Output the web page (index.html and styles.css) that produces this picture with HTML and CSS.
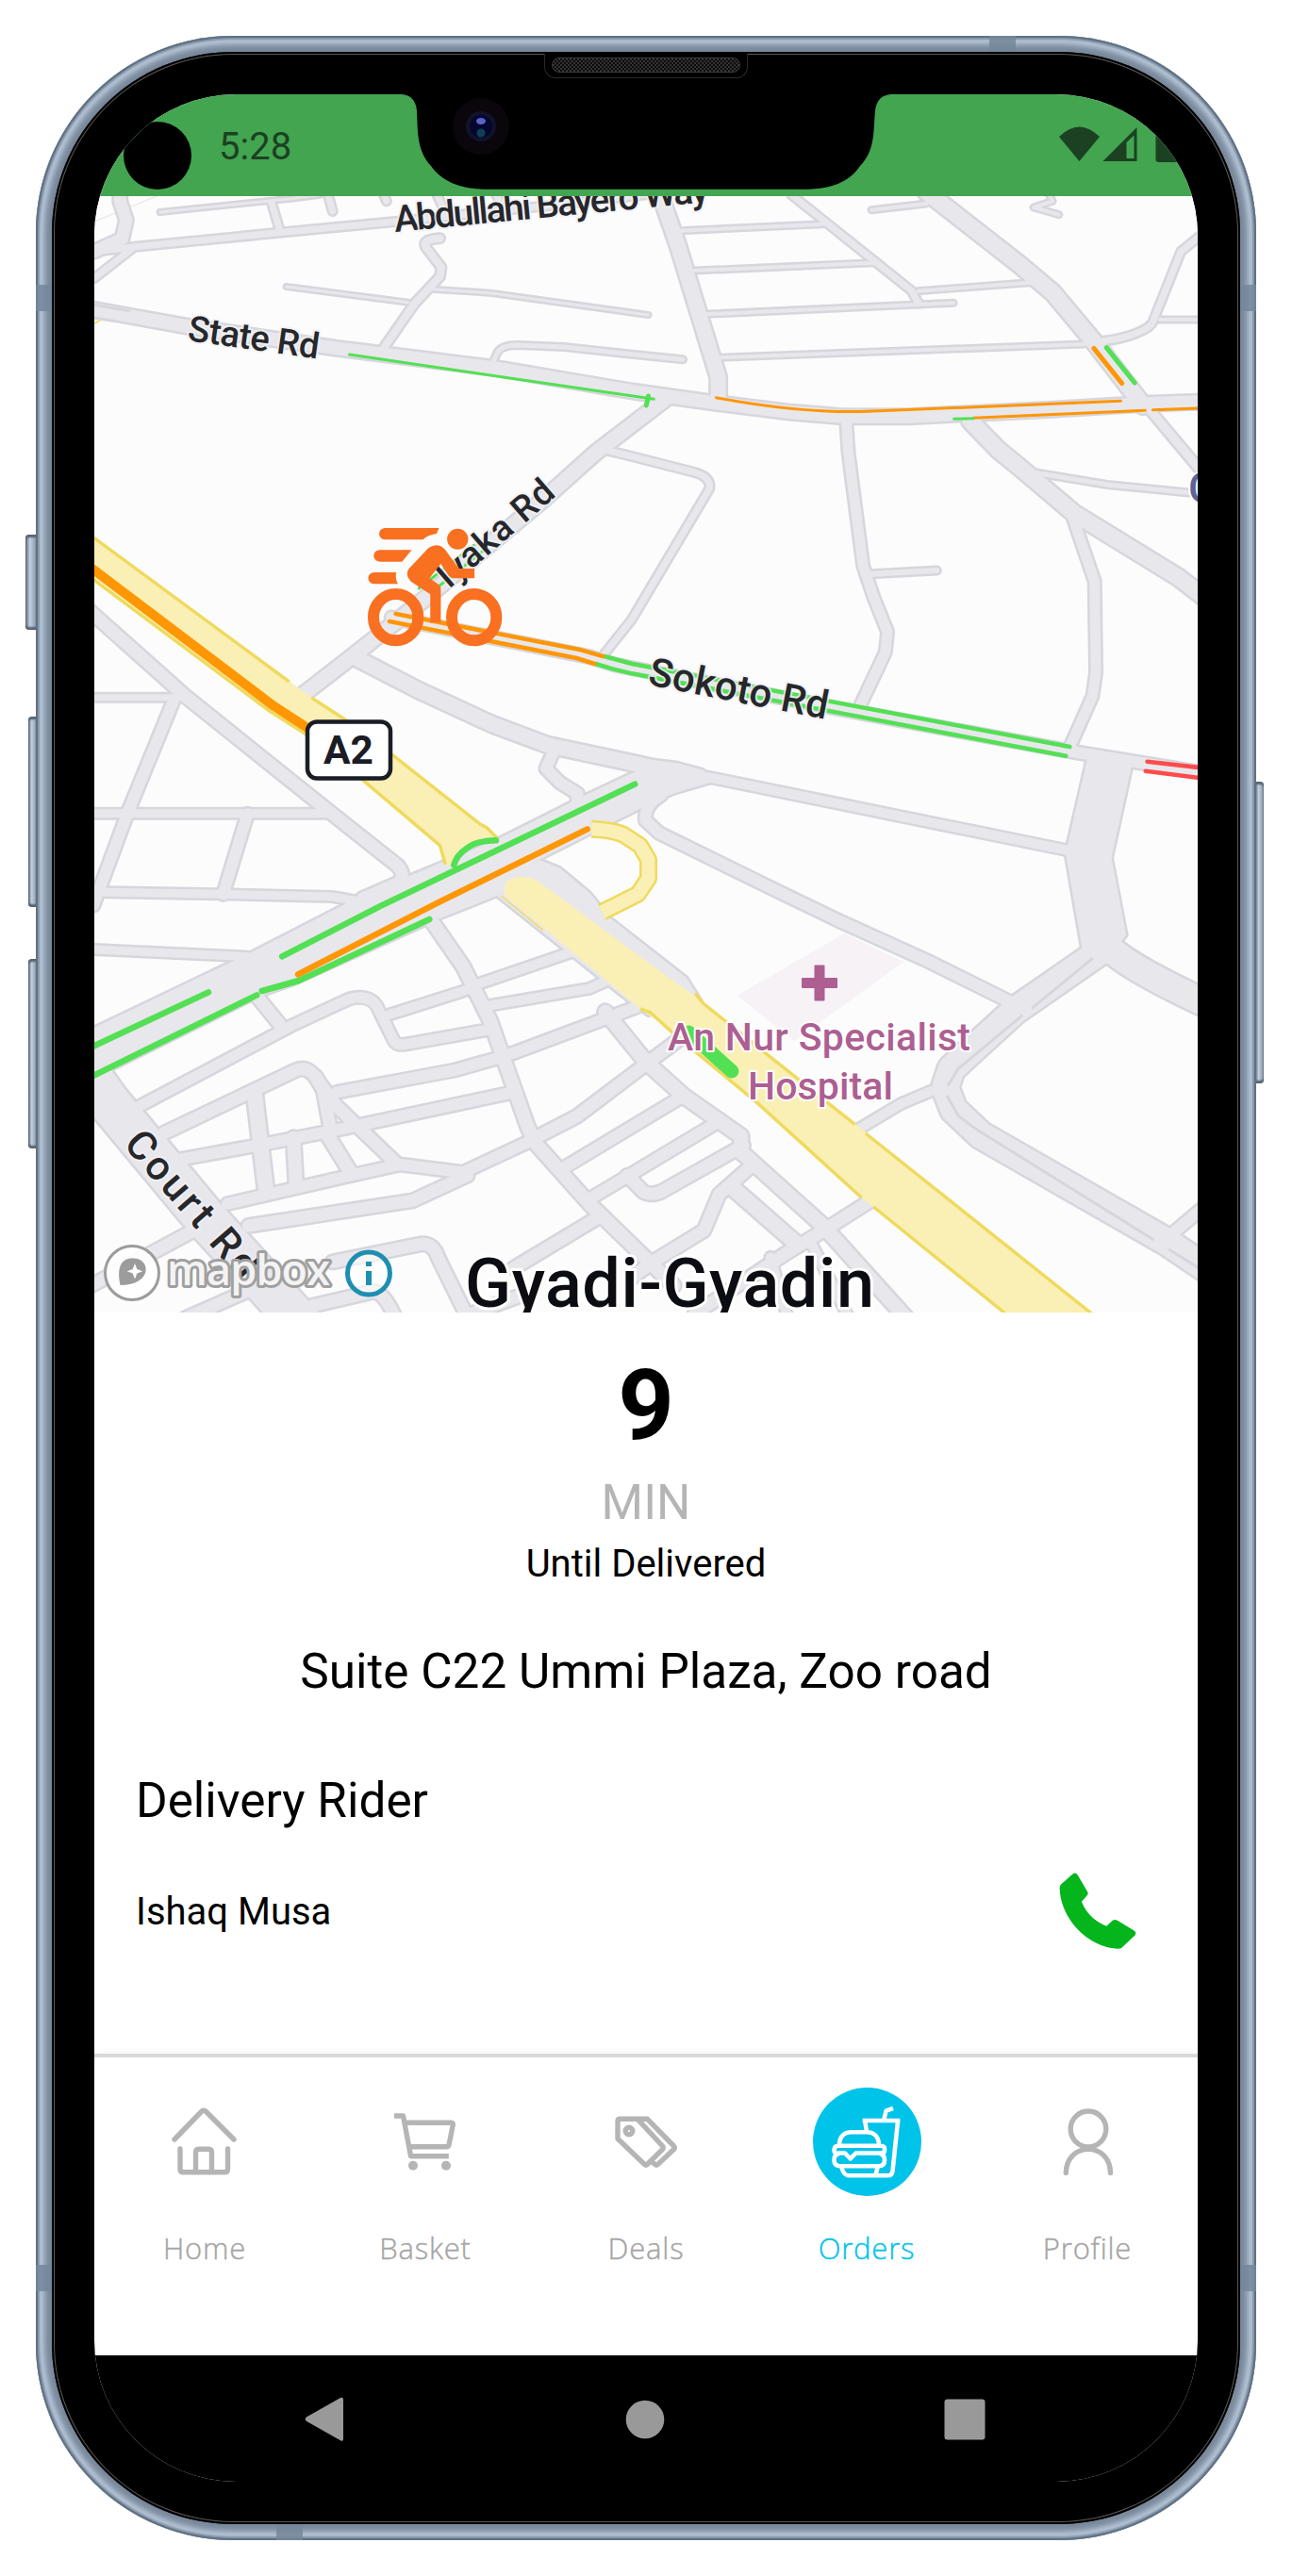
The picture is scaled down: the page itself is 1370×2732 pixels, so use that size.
FILE: index.html
```html
<!DOCTYPE html>
<html lang="en">
<head>
<meta charset="utf-8">
<title>Order tracking</title>
<link rel="stylesheet" href="styles.css">
</head>
<body>
<div class="phone">
  <i class="key key-mute"></i><i class="key key-up"></i><i class="key key-down"></i><i class="key key-power"></i>
  <div class="frame">
    <i class="band band-l1"></i><i class="band band-l2"></i><i class="band band-r1"></i><i class="band band-r2"></i><i class="band band-t"></i><i class="band band-b"></i>
    <div class="bezel">
      <main class="screen">
        <header class="status">
          <span class="punch"></span>
          <time class="clock">5:28</time>
          <svg class="signals" viewBox="0 0 147 40" width="147" height="40">
            <path d="M0 12Q21.500-9 43 12L21.500 38Z"/>
            <path fill-rule="evenodd" d="M46.500 38L82.500 2V38ZM71.500 35H79.500V10.500L71.500 18Z"/>
            <rect x="102.500" y="4" width="24" height="35" rx="3"/>
          </svg>
        </header>

        <section class="map">
          <svg viewBox="100 208 1170 1184" width="1170" height="1184">
            <defs>
              <g id="roads">
                <path style="--w:13px" d="M285 600V640L300 700L290 760L224 800"/>
                <path style="--w:7px" d="M224 800L320 785L650 742L940 705L1300 655L1560 615"/>
                <path style="--w:7px" d="M315 790L224 885"/>
                <path style="--w:3px" d="M380 675L690 632L760 620"/>
                <path style="--w:7px" d="M645 645L665 735M775 600L790 672M905 600L918 640M1035 610L1055 670M1175 610L1195 660"/>
                <path style="--w:14px" d="M210 982L450 1040L800 1108L1180 1172L1501 1245L1700 1282L1880 1312L2000 1325H2160L2500 1303L2720 1285L2860 1278"/>
                <path style="--w:3px" d="M680 912L970 962M1025 920L1165 932L1540 1002"/>
                <path style="--w:8px" d="M1045 758Q1000 762 1012 787L1048 850L1045 880L985 965L910 1110"/>
                <path style="--w:5px" d="M1170 1155L1182 1120Q1192 1098 1230 1098L1340 1104L1501 1127L1622 1144"/>
                <path style="--w:16px" d="M1563 600L1610 780L1706 1200V1270"/>
                <path style="--w:4px" d="M1605 735L1955 713M1635 862L2075 836M1672 1000L2265 964M1708 1138L2575 1095M2180 926L2460 898M2070 668L2200 648M2492 620L2500 640L2455 660L2515 683M2755 1017H2860"/>
                <path style="--w:7px" d="M1880 620L1955 700L2165 925L2182 965"/>
                <path style="--w:17px" d="M2200 610L2420 840L2500 930L2600 1090L2715 1290"/>
                <path style="--w:7px" d="M2860 740L2805 800L2738 1025Q2732 1042 2700 1060Q2660 1080 2620 1085"/>
                <path style="--w:9px" d="M2735 1310L2860 1510"/>
                <path style="--w:17px" d="M2305 1340L2370 1430L2425 1490L2550 1632L2800 1838L2860 1900"/>
                <path style="--w:5px" d="M2440 1500L2630 1542L2830 1568"/>
                <path style="--w:11px" d="M2549 1650L2600 1850L2603 2140L2595 2215L2540 2380"/>
                <path style="--w:11px" d="M2010 1340L2015 1440L2050 1800L2075 1900L2108 2010L2103 2075L2045 2240"/>
                <path style="--w:6px" d="M2070 1826L2225 1815"/>
                <path style="--w:15px" d="M1580 1270L1415 1440L1290 1590L1000 1915L840 2085L720 2210"/>
                <path style="--w:7px" d="M1440 1432L1501 1452L1650 1503Q1690 1518 1685 1555L1501 1970L1430 2090"/>
                <path style="--w:16px" d="M840 2090L1000 2200L1170 2305L1300 2370L1510 2430L1640 2470"/>
                <path style="--w:10px" d="M1680 2472L2560 2712"/>
                <path style="--w:12px" d="M930 1965L1400 2090L1460 2115L1971 2250L2540 2390L2860 2460"/>
                <path class="area" d="M1500 2410L1610 2428L1670 2450L1700 2485L1610 2520L1562 2545L1280 2735L1180 2850L1040 2925L700 3130L615 3170L210 3440V3278L600 3028L855 2852L1185 2668L1390 2530L1520 2448Z"/>
                <path class="area" d="M1180 2850L1280 2735L1330 2762L1400 2840L1450 2922L1501 2975L1630 3110L1665 3185L1540 3230L1490 3182Z"/>
                <path style="--w:12px" d="M1315 2390L1297 2445L1330 2490L1372 2525L1370 2560L1290 2650"/>
                <path style="--w:12px" d="M1570 2530Q1530 2560 1533 2610L1565 2650L1826 2822L2001 2935L2201 3056L2406 3192"/>
                <path class="area" d="M2585 2400L2690 2425L2640 2730L2675 2975L2625 3060L2570 3015L2531 2715Z"/>
                <path style="--w:28px" d="M2625 3000Q2655 3062 2860 3190"/>
                <path style="--w:28px" d="M2610 3030L2411 3215L2260 3400L2245 3460L2265 3530L2330 3612L2770 3950L2870 4040"/>
                <path style="--w:12px" d="M2860 3840L2780 3930"/>
                <path style="--w:10px" d="M2210 3472L2140 3512L2030 3600"/>
                <path style="--w:13px" d="M210 1940L440 2215L780 2580L945 2755Q965 2790 945 2810L860 2860"/>
                <path style="--w:7px" d="M210 2219H445"/>
                <path style="--w:12px" d="M412 2230L305 2580L222 2880M588 2590L530 2845"/>
                <path style="--w:9px" d="M210 2588H790M210 2838L520 2845L790 2853L860 2870M210 3020L590 3044"/>
                <g transform="translate(0 2820)">
                  <path style="--w:44px" d="M190 560L260 690L490 1060L640 1280L720 1400"/>
                  <path style="--w:11px" d="M330 700L690 445L830 358Q885 340 900 395L935 490Q943 508 965 502L1165 455"/>
                  <path style="--w:13px" d="M610 350L668 445"/>
                  <path style="--w:13px" d="M390 785L700 587Q725 570 745 600L800 700L940 880"/>
                  <path style="--w:13px" d="M750 605L768 650L785 775"/>
                  <path style="--w:16px" d="M605 665L632 970"/>
                  <path style="--w:12px" d="M430 868L620 822L800 775L1220 655"/>
                  <path style="--w:12px" d="M800 655L1080 585L1200 540L1540 370"/>
                  <path style="--w:14px" d="M1025 110L1100 255L1165 430L1252 760L1270 815L1400 1010L1600 1270"/>
                  <path style="--w:10px" d="M1120 318L1360 208M925 408L1120 325M1160 380L1400 325L1450 295"/>
                  <path style="--w:13px" d="M1265 805L1370 732L1540 560L1620 480"/>
                  <path style="--w:12px" d="M540 1010L800 930L950 885L1100 910L1260 810"/>
                  <path style="--w:13px" d="M590 1080L980 1000L1110 920"/>
                  <path style="--w:14px" d="M697 800L703 945M775 785L835 915"/>
                  <path style="--w:15px" d="M1438 400L1535 560L1625 668L1760 795V845L1955 1080L2150 1370"/>
                  <path style="--w:12px" d="M1340 895L1625 665M1400 995L1705 750"/>
                  <path style="--w:13px" d="M1490 920L1528 972Q1545 985 1570 972L1765 825"/>
                  <path style="--w:13px" d="M1780 895L1708 980L1672 1095L1550 1195L1501 1245"/>
                  <path style="--w:16px" d="M1745 965L1890 1135"/>
                  <path style="--w:13px" d="M2080 990L1960 1092L1870 1165L1650 1360M1425 1050L1220 1215"/>
                  <path style="--w:13px" d="M790 1195L1000 1138Q1030 1135 1040 1180L1110 1370M740 1335L885 1290Q910 1285 938 1370M210 1275L460 1095M440 1375L600 1280M1100 1370L1240 1300"/>
                  <path style="--w:10px" d="M1925 1130L2015 1370M1830 1180L1870 1370"/>
                </g>
              </g>
              <path id="loop" d="M1405 2638Q1450 2640 1480 2655L1520 2690L1540 2735V2795L1515 2845L1430 2902"/>
            </defs>

            <g class="plan" transform="scale(.446429 .333333)">
              <path fill="#f6f2f6" d="M2006 2970L2146 3060L1886 3312L1751 3167Z"/>
              <path class="lot" d="M224 705L380 620"/>
              <use href="#roads" class="casing"/>
              <use href="#roads" class="surface"/>
              <path class="median" d="M2596 3048L2451 3208M2429 3230L2276 3400L2251 3455M2249 3485L2276 3550L2321 3595L2741 3945M2776 3975L2860 4045M224 970L310 990M224 1012L275 1022"/>
              <use href="#loop" class="loop-casing"/>
              <use href="#loop" class="loop-surface"/>
              <path class="highway" d="M210 1698L690 2170L740 2220L820 2290L935 2405L1140 2622L1182 2668L1130 2675L1095 2700L1078 2752H1058L1045 2690L860 2480L725 2335L640 2262L210 1832Z"/>
              <path class="highway" d="M1285 2810L1501 3025L1661 3180L2031 3575L2600 4185H2395L2046 3810L1801 3510L1601 3285L1521 3210L1200 2850Q1190 2810 1215 2795Q1255 2780 1285 2810Z"/>
              <path class="kerb" d="M210 1698L687 2169M740 2220L820 2290L935 2405L1140 2622L1155 2632L1182 2668M210 1832L640 2262L725 2335L860 2480L1045 2690L1058 2750M1651 3160L1670 3192L2031 3578M2056 3606L2600 4187M1521 3210L1545 3222L1601 3290L1801 3512L2046 3810M2075 3840L2395 4187"/>
              <path class="hair" d="M224 1030L238 1018M1190 2850L1290 2960"/>

              <g class="traffic">
                <path class="slow" style="stroke-width:10px" d="M210 1800L650 2246L735 2320"/>
                <path class="free thin" d="M830 1128L1553 1270"/>
                <path class="free" style="stroke-width:5px" d="M1540 1260L1535 1290M2628 1106L2695 1218"/>
                <path class="slow" style="stroke-width:5px" d="M2598 1108L2665 1220"/>
                <path class="slow thin" d="M1701 1265Q1900 1315 2060 1309L2662 1276M2312 1330L2720 1306M2738 1304L2860 1298"/>
                <path class="free thin" d="M2266 1333L2312 1331"/>
                <path class="free mid" d="M1435 2088L1501 2112L2541 2376M1415 2112L1455 2128L1501 2143L2532 2405"/>
                <path class="slow mid" d="M940 1953L1380 2068L1432 2088M925 1977L1370 2094L1412 2112"/>
                <path class="jam mid" d="M2725 2423L2860 2444M2721 2453L2860 2477"/>
                <path class="free wide" d="M1508 2495L905 2882L670 3043M1020 2925L710 3120L622 3153M610 3166L210 3430M495 3157L210 3336"/>
                <path class="slow wide" d="M1395 2638L1040 2872L708 3100"/>
                <path class="free wide" d="M1178 2674Q1130 2675 1108 2700Q1085 2720 1078 2752"/>
                <path class="free" style="stroke-width:15px" d="M1636 3285L1738 3408"/>
                <path class="free thin" d="M995 1872L1125 1735M1040 1868L1150 1750"/>
              </g>
            </g>

            <g class="street">
              <text transform="translate(419 246) rotate(-5.500)" font-size="39" textLength="335">Abdullahi Bayero Way</text>
              <text transform="translate(198 361) rotate(8)" font-size="38" textLength="140">State Rd</text>
              <text transform="translate(476 625) rotate(-41)" font-size="38" textLength="152">Iyaka Rd</text>
              <text transform="translate(686 726) rotate(11)" font-size="42" textLength="193">Sokoto Rd</text>
              <text transform="translate(130 1214) rotate(49)" font-size="43" textLength="192">Court Rd</text>
            </g>
            <g class="poi">
              <path d="M864.500 1024.500h9v13.500h13.500v9h-13.500v13.500h-9v-13.500h-13.500v-9h13.500z"/>
              <text x="708" y="1114" textLength="321">An Nur Specialist</text>
              <text x="793" y="1166" textLength="154">Hospital</text>
            </g>
            <text class="campus" x="1260" y="533">C</text>
            <text class="district" x="493" y="1385.500" textLength="434">Gyadi-Gyadin</text>

            <g class="shield">
              <rect x="326" y="765.500" width="88" height="60" rx="10"/>
              <text x="343" y="810" textLength="53" lengthAdjust="spacingAndGlyphs">A2</text>
            </g>

            <g class="rider" transform="scale(.446429 .333333) translate(0 1440)">
              <path d="M915 240H1043L1037 258Q1015 262 1005 277H915C896 275 896 242 915 240Z"/>
              <path d="M902 310H978L955 347H902C883 345 883 312 902 310Z"/>
              <path d="M889 381H941Q938 400 945 418H889C870 416 870 383 889 381Z"/>
              <ellipse cx="1087" cy="275" rx="25" ry="33"/>
              <path d="M1018 303Q1040 285 1057 308L1090 369H1127V400H1075L1066 392L1047 354L1020 400L1043 421Q1047 427 1047 437V541H1022V451L976 410Q961 388 971 370Z"/>
              <ellipse class="wheel" cx="940" cy="524" rx="53" ry="74"/>
              <ellipse class="wheel" cx="1126" cy="524" rx="53" ry="74"/>
            </g>

            <g class="brand">
              <circle cx="140" cy="1350" r="28.500"/>
              <path class="drop" d="M127.500 1363C123 1340 131 1334 142 1334.500C160 1335 162 1363 127.500 1363Z"/>
              <path class="star" d="M143 1340l2.300 6 6 2.300-6 2.300-2.300 6-2.300-6-6-2.300 6-2.300z"/>
              <text x="177" y="1363" textLength="173">mapbox</text>
            </g>
            <g class="info">
              <circle cx="391" cy="1350.500" r="22.500"/>
              <path d="M391 1338v5M391 1348v15"/>
            </g>
          </svg>
        </section>

        <section class="details">
          <strong class="eta">9</strong>
          <span class="unit">MIN</span>
          <span class="until">Until Delivered</span>
          <p class="address">Suite C22 Ummi Plaza, Zoo road</p>
          <h2 class="role">Delivery Rider</h2>
          <div class="contact">
            <span>Ishaq Musa</span>
            <svg class="call" viewBox="0 0 82 81" width="82" height="81"><path d="M14.500 1.500Q17.500-.8 19.700 2.500L30.300 20.500Q31.200 22.500 29.500 24.500L23.900 30.700Q31 49 50.200 56.700L56.800 50.800Q59 49.400 61.500 50.600L79.500 61.500Q82.500 63.500 80.500 66.500L67.700 78.500Q66.200 80.700 62 80.700C30 79 2 49 .7 17.500Q.5 14 2 12.500Z"/></svg>
          </div>
        </section>

        <nav class="tabs">
          <a class="tab">
            <span class="glyph"><svg viewBox="0 0 80 80" width="80" height="80"><path stroke-linecap="round" d="M8 37L36.500 7.500Q39 5 41.500 7.500L71 37M14 47V68.500Q14 71.800 17.500 71.800H61Q64.500 71.800 64.500 68.500V47M30.500 71V51Q30.500 47.300 34 47.300H44Q47.500 47.300 47.500 51V71"/></svg></span>
            <span>Home</span>
          </a>
          <a class="tab">
            <span class="glyph"><svg viewBox="0 0 80 80" width="80" height="80"><path d="M7 12H16.500L24.600 54.700H64.800M19 19.300H67.500Q69.800 19.300 69.300 21.500L65 43Q64.500 44.700 62.500 44.700H23"/><circle class="dot" cx="27" cy="64.700" r="5"/><circle class="dot" cx="62" cy="64.700" r="5"/></svg></span>
            <span>Basket</span>
          </a>
          <a class="tab">
            <span class="glyph"><svg viewBox="0 0 80 80" width="80" height="80"><path d="M12.500 15.300H31L57.500 44Q58.800 45.700 57.500 47.500L41.300 63.500Q40 64.700 38.500 63.500L10 36.300V18Q10 15.300 12.500 15.300ZM31 15.300H41.500L69.500 44Q71 45.700 69.500 47.500L52.500 63.500Q51 64.700 49.500 63.500L46 60"/><circle cx="22" cy="28" r="3.800"/></svg></span>
            <span>Deals</span>
          </a>
          <a class="tab active">
            <span class="glyph"><svg viewBox="0 0 115 115" width="115" height="115"><path d="M85 22L77.600 24.700L75 35M52.600 35H92.400M90 36L84.500 88.500Q84 93.300 79.500 93.300H37Q32.500 92.500 30.300 84.500M55.300 36L57 47M68.500 84.500Q67.500 90 66 93.300M28 61.500C28 50 35 47.300 41 47.300H57C65 47.300 70 52 70 61.500M27 61.700H72Q76.500 62 76 66Q76 70 72 70.500Q76 71.500 76 77Q76 83.300 70 83.300H29Q22.500 83.300 22.500 77Q22.500 71.500 26.500 70.500Q22.500 70 22.500 66Q22.500 62 27 61.700M26 69.500H34L39.700 75.500L45.500 69.500H73"/></svg></span>
            <span>Orders</span>
          </a>
          <a class="tab">
            <span class="glyph"><svg viewBox="0 0 80 80" width="80" height="80"><ellipse cx="41" cy="26" rx="18.800" ry="19"/><path stroke-linecap="round" d="M17.300 72.500C18 39 64 39 64.500 72.500"/></svg></span>
            <span>Profile</span>
          </a>
        </nav>

        <footer class="system">
          <svg viewBox="0 0 44 48" width="44" height="48"><path d="M1.800 21.500L38.500.8Q41 0 41 3V44.500Q41 47.500 38.500 46.500L1.800 25.800Q-.3 23.800 1.800 21.500Z"/></svg>
          <svg viewBox="0 0 44 48" width="44" height="48"><circle cx="22" cy="24" r="20.300"/></svg>
          <svg viewBox="0 0 44 48" width="44" height="48"><rect x=".5" y="2.500" width="43" height="43" rx="3"/></svg>
        </footer>
      </main>
      <svg class="notch" viewBox="420 99 530 103" width="530" height="103">
        <path d="M420 99V100H426Q440 101 442 117C443 140 442 160 457 176C470 194 490 200.800 518 200.800H851C880 200.800 900 194 912 176C928 160 926 140 928 117Q930 101 945 100H950V99Z"/>
        <circle cx="510" cy="134" r="30" fill="#0a060c"/>
        <circle cx="510" cy="134" r="16" fill="#11132c"/>
        <circle cx="510" cy="134" r="12" fill="#05062f"/>
        <ellipse cx="510" cy="128.500" rx="5" ry="3.500" fill="#5a63c8"/>
        <ellipse cx="510" cy="141" rx="4.500" ry="4.500" fill="#0d4150"/>
      </svg>
      <div class="speaker"><i></i></div>
    </div>
  </div>
</div>
</body>
</html>
```
FILE: styles.css
```css
* { box-sizing: border-box; }
body { margin: 0; background: #fff; font-family: Roboto, "Liberation Sans", sans-serif; color: #000; }

/* device shell */
.phone { position: relative; width: 1370px; height: 2732px; padding: 38px; }
.frame {
  position: relative; width: 1294px; height: 2656px; padding: 17px; border-radius: 209px;
  background: #78879a;
  box-shadow: inset 0 0 0 2px #607182, inset 0 0 2px 4px #8092a5, inset 0 0 4px 8px #b7c6d8, inset 0 0 5px 12px #8e9eb1;
}
.key { position: absolute; background: linear-gradient(90deg, #5d6c7b, #c2d0e0 40%, #8393a5); border-radius: 4px 0 0 4px; box-shadow: inset 0 3px 2px #56646f, inset 0 -3px 2px #56646f; }
.key-mute { left: 27px; top: 567px; width: 12px; height: 101px; }
.key-up { left: 30px; top: 760px; width: 9px; height: 202px; }
.key-down { left: 30px; top: 1017px; width: 9px; height: 201px; }
.key-power { left: 1331px; top: 829px; width: 9px; height: 320px; border-radius: 0 4px 4px 0; }
.band { position: absolute; background: #74879a; opacity: .85; width: 17px; height: 28px; }
.band-l1 { left: 0; top: 264px; }
.band-l2 { left: 0; top: 2364px; }
.band-r1 { right: 0; top: 264px; }
.band-r2 { right: 0; top: 2364px; }
.band-t { left: 1011px; top: 0; width: 28px; height: 17px; }
.band-b { left: 255px; bottom: 0; width: 28px; height: 17px; }
.bezel {
  position: relative; width: 1260px; height: 2622px; padding: 45px; border-radius: 192px; background: #000;
  box-shadow: inset 0 0 0 2px #000, inset 0 0 0 3px #5c5a58;
}
.notch { position: absolute; left: 365px; top: 44px; }
.speaker { position: absolute; left: 522px; top: 2px; width: 216px; height: 26px; padding: 4px 7px; background: #000; border: 1px solid #2a2a2a; border-top: 0; border-radius: 0 0 12px 12px; }
.speaker i { display: block; height: 16px; border-radius: 8px; border: 1px solid #3c3c3c; background: repeating-conic-gradient(#333 0 25%, #0b0b0b 0 50%) 0 0 / 4px 4px; }

/* app screen */
.screen { width: 1170px; height: 2532px; display: flex; flex-direction: column; overflow: hidden; border-radius: 150px; background: #fff; }
.status { height: 108px; flex: none; display: flex; align-items: center; padding-left: 31px; background: #43a550; }
.punch { width: 72px; height: 72px; margin-top: 22px; border-radius: 50%; background: #000; }
.clock { margin-left: 29px; margin-top: 3px; font-size: 40px; color: #1b4122; }
.signals { margin-left: auto; margin-top: -2px; fill: #1b4122; }

/* map */
.map { height: 1184px; flex: none; background: #fcfcfc; overflow: hidden; }
.map svg { display: block; }
.plan path { vector-effect: non-scaling-stroke; fill: none; stroke-linejoin: round; }
.plan path[fill] { fill: #f6f2f6; }
#roads path { stroke: currentColor; stroke-width: calc(var(--w, 0px) + var(--edge)); fill: none; vector-effect: non-scaling-stroke; stroke-linecap: round; stroke-linejoin: round; }
#roads path.area { fill: currentColor; }
.casing { color: #d6d6dd; --edge: 5px; }
.surface { color: #e8e7ec; --edge: 0px; }
.lot { stroke: #e3e3e3; stroke-width: 1px; }
.median { stroke: #d6d7dc; stroke-width: 3px; }
#loop { fill: none; vector-effect: non-scaling-stroke; stroke-linejoin: round; }
.loop-casing { stroke: #efda5e; stroke-width: 19px; }
.loop-surface { stroke: #faf0b5; stroke-width: 14px; }
.plan .highway { fill: #faf0b5; }
.kerb { stroke: #efda5e; stroke-width: 3.5px; }
.hair { stroke: #efda5e; stroke-width: 1.5px; }
.traffic path { stroke-linecap: round; }
.free { stroke: #53e054; }
.slow { stroke: #ff9604; }
.jam { stroke: #ff4b4b; }
.thin { stroke-width: 3px; }
.mid { stroke-width: 4.5px; }
.wide { stroke-width: 6.5px; }
.map text { font-weight: 500; paint-order: stroke; stroke-linejoin: round; }
.street text { fill: #26272b; stroke: #f1f0f4; stroke-width: 4px; stroke-opacity: .8; }
.poi { fill: #ad5f92; }
.poi path { stroke: #ad5f92; stroke-width: 2px; stroke-linejoin: round; }
.poi text { font-size: 41px; stroke: #fff; stroke-width: 4px; }
.map .campus { font-size: 45px; fill: #5d6598; stroke: #fff; stroke-width: 4px; }
.map .district { font-size: 72px; fill: #0c0d12; stroke: #fff; stroke-width: 6px; }
.shield rect { fill: #fff; stroke: #1a1c26; stroke-width: 4.5px; }
.shield text { font-size: 43px; font-weight: 700; fill: #1a1c26; }
.rider { fill: #f97020; }
.wheel { fill: none; stroke: #f97020; stroke-width: 12px; vector-effect: non-scaling-stroke; }
.brand circle { fill: #fff; fill-opacity: .9; stroke: #9c9c9c; stroke-width: 3px; }
.brand .drop { fill: #9c9c9c; }
.brand .star { fill: #fff; }
.map .brand text { font: 600 45px "Open Sans", sans-serif; fill: #fff; fill-opacity: .9; stroke: #a0a0a0; stroke-width: 6px; }
.info circle { fill: #fff; fill-opacity: .6; stroke: #1e8fb0; stroke-width: 5px; }
.info path { stroke: #1e8fb0; stroke-width: 6px; }

/* delivery details */
.details { flex: 1; display: flex; flex-direction: column; align-items: center; padding: 38px 44px 0; }
.eta { font-size: 104px; line-height: 122px; font-weight: 700; }
.unit { margin-top: 12px; font-size: 51px; line-height: 60px; color: #b5b5b5; }
.until { margin-top: 12px; font-size: 40px; line-height: 46px; }
.address { margin: 61px 0 0; font-size: 51.3px; line-height: 60px; white-space: nowrap; }
.role { align-self: stretch; margin: 77px 0 0; font-size: 51.3px; line-height: 60px; font-weight: 400; }
.contact { align-self: stretch; margin: 46px 21px 0 0; display: flex; justify-content: space-between; align-items: center; font-size: 40px; line-height: 46px; }
.contact span { padding-top: 3px; }
.call { fill: #04b51b; }

/* tab bar */
.tabs { height: 320px; flex: none; display: flex; border-top: 4px solid #d9d9d9; padding-top: 32px; box-shadow: 0 -3px 8px rgba(0,0,0,.03); }
.tab { flex: 1; display: flex; flex-direction: column; align-items: center; gap: 34px; font: 300 31px/42px "Open Sans", sans-serif; letter-spacing: .8px; color: #a5a5a5; -webkit-text-stroke: .4px currentColor; }
.glyph { width: 115px; height: 115px; display: flex; align-items: center; justify-content: center; border-radius: 50%; }
.glyph svg { fill: none; stroke: #b5b5b5; stroke-width: 5.4px; stroke-linejoin: round; }
.glyph .dot { fill: #b5b5b5; stroke: none; }
.tab.active { color: #00c3ea; }
.active .glyph { background: #00c3ea; }
.active .glyph svg { stroke: #fff; stroke-width: 4.6px; }

/* system navigation */
.system { height: 134px; flex: none; display: flex; justify-content: space-between; padding: 44px 225px 0 223px; background: #000; }
.system svg { fill: #999; }
```
